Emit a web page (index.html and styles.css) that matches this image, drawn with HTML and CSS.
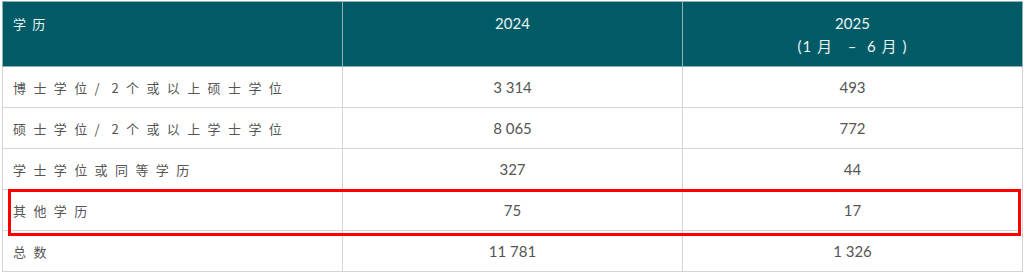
FILE: index.html
```html
<!DOCTYPE html>
<html lang="zh">
<head>
<meta charset="utf-8">
<link rel="stylesheet" href="styles.css">
</head>
<body>
<div class="wrap">
<table class="edu">
  <colgroup><col class="c1"><col class="c2"><col class="c3"></colgroup>
  <thead>
    <tr>
      <th class="lbl head-lbl">学历</th>
      <th class="num">2024</th>
      <th class="num">2025<br><span class="period">(1 月&nbsp;&nbsp; –&nbsp; 6 月 )</span></th>
    </tr>
  </thead>
  <tbody>
    <tr><td class="lbl">博士学位/ 2个或以上硕士学位</td><td class="num">3 314</td><td class="num">493</td></tr>
    <tr><td class="lbl">硕士学位/ 2个或以上学士学位</td><td class="num">8 065</td><td class="num">772</td></tr>
    <tr><td class="lbl">学士学位或同等学历</td><td class="num">327</td><td class="num">44</td></tr>
    <tr><td class="lbl">其他学历</td><td class="num">75</td><td class="num">17</td></tr>
    <tr><td class="lbl">总数</td><td class="num">11 781</td><td class="num">1 326</td></tr>
  </tbody>
</table>
<div class="highlight"></div>
</div>
</body>
</html>
```
FILE: styles.css
```css
html, body {
  margin: 0;
  padding: 0;
  background: #ffffff;
}
.wrap {
  position: relative;
  width: 1021px;
  padding: 1px 0 0 2px;
}
.edu {
  border-collapse: collapse;
  width: 1020px;
  table-layout: fixed;
  font-family: "Noto Sans CJK SC", sans-serif;
}
.c1, .c2, .c3 { width: 340px; }
.edu th {
  background: #015b66;
  color: #e9f3f4;
  font-weight: normal;
  height: 65px;
  box-sizing: border-box;
  vertical-align: top;
  padding: 10px 10px 0 10px;
  border: 1px solid #8fb0b4;
  line-height: 23px;
}
.edu td {
  height: 41px;
  box-sizing: border-box;
  border: 1px solid #d4d4d4;
  color: #555555;
  padding: 0 10px;
  vertical-align: middle;
}
.lbl {
  text-align: left;
  font-size: 13px;
  letter-spacing: 7.4px;
  word-spacing: -6px;
  font-family: "Noto Sans CJK SC", sans-serif;
}
.edu th.head-lbl {
  letter-spacing: 6.2px;
}
.num {
  text-align: center;
  font-size: 15px;
  font-family: Lato, "Noto Sans CJK SC", sans-serif;
}
.period {
  letter-spacing: 1px;
}
.highlight {
  position: absolute;
  left: 8px;
  top: 189px;
  width: 1007px;
  height: 41px;
  border: 3px solid #ff0000;
  pointer-events: none;
}
```
